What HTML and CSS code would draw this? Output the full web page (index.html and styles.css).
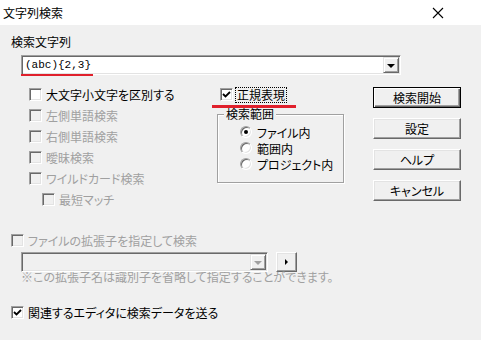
FILE: index.html
```html
<!DOCTYPE html>
<html lang="ja">
<head>
  <meta charset="UTF-8">
  <title>文字列検索</title>
  <link rel="stylesheet" href="styles.css">
</head>
<body>
  <div class="titlebar">
    <span class="title">文字列検索</span>
    <svg class="close" width="12" height="12" viewBox="0 0 12 12">
      <path d="M1 1 L11 11 M11 1 L1 11" stroke="#000" stroke-width="1.1" fill="none"/>
    </svg>
  </div>

  <div class="dialog">
    <div class="field-label">検索文字列</div>
    <div class="combo combo-main">
      <span class="combo-text">(abc){2,3}</span>
      <span class="drop-btn"><span class="arrow"></span></span>
      <span class="mark mark-combo"></span>
    </div>

    <div class="options">
      <!-- left: search flags -->
      <div class="col-left">
        <div class="check"><span class="box"></span>大文字小文字を区別する</div>
        <div class="check disabled"><span class="box"></span>左側単語検索</div>
        <div class="check disabled"><span class="box"></span>右側単語検索</div>
        <div class="check disabled"><span class="box"></span>曖昧検索</div>
        <div class="check disabled"><span class="box"></span>ワイルドカード検索</div>
        <div class="check disabled indent"><span class="box"></span>最短マッチ</div>
      </div>

      <!-- middle: regex + scope -->
      <div class="col-mid">
        <div class="check regex">
          <span class="box">
            <svg width="9" height="9" viewBox="0 0 9 9"><path d="M1 4 L3.5 6.5 L8 2" stroke="#000" stroke-width="1.8" fill="none"/></svg>
          </span>
          <span class="focus">正規表現</span>
          <span class="mark mark-regex"></span>
        </div>
        <div class="group">
          <div class="group-title">検索範囲</div>
          <div class="radios">
            <div class="radio"><span class="dot checked"></span>ファイル内</div>
            <div class="radio"><span class="dot"></span>範囲内</div>
            <div class="radio"><span class="dot"></span>プロジェクト内</div>
          </div>
        </div>
      </div>

      <!-- right: buttons -->
      <div class="col-buttons">
        <button class="btn default">検索開始</button>
        <button class="btn">設定</button>
        <button class="btn">ヘルプ</button>
        <button class="btn">キャンセル</button>
      </div>
    </div>

    <div class="check disabled ext-check"><span class="box"></span>ファイルの拡張子を指定して検索</div>
    <div class="ext-row">
      <div class="combo combo-ext">
        <span class="drop-btn"><span class="arrow gray"></span></span>
      </div>
      <span class="small-btn"><span class="tri"></span></span>
    </div>
    <div class="note">※この拡張子名は識別子を省略して指定することができます。</div>

    <div class="check send-check">
      <span class="box">
        <svg width="9" height="9" viewBox="0 0 9 9"><path d="M1 4 L3.5 6.5 L8 2" stroke="#000" stroke-width="1.8" fill="none"/></svg>
      </span>
      関連するエディタに検索データを送る
    </div>
  </div>
</body>
</html>
```

FILE: styles.css
```css
* {
  box-sizing: border-box;
}

body {
  margin: 0;
  width: 481px;
  height: 340px;
  overflow: hidden;
  background-color: #f0f0f0;
  color: #000;
  font-family: "Noto Sans CJK JP", sans-serif;
  font-size: 12px;
  font-feature-settings: "palt";
}

.titlebar {
  height: 25px;
  background-color: #fff;
  display: flex;
  align-items: center;
  justify-content: space-between;
  padding: 0 37px 0 3px;
}

.title {
  font-size: 12px;
  color: #000;
}

.field-label {
  margin: 10px 0 0 11px;
  line-height: 14px;
}

/* combo boxes */
.combo {
  position: relative;
  height: 20px;
  background-color: #fff;
  border: 1px solid;
  border-color: #a0a0a0 #fff #fff #a0a0a0;
  box-shadow: inset 1px 1px 0 #696969, inset -1px -1px 0 #e3e3e3;
  display: flex;
  align-items: center;
}

.combo-main {
  margin: 6px 0 0 21px;
  width: 380px;
}

.combo-text {
  font-family: "Liberation Mono", monospace;
  font-size: 11px;
  padding-left: 3px;
  flex: 1;
}

.drop-btn {
  width: 16px;
  height: 16px;
  margin-right: 1px;
  margin-left: auto;
  background-color: #f0f0f0;
  border: 1px solid;
  border-color: #e3e3e3 #696969 #696969 #e3e3e3;
  box-shadow: inset 1px 1px 0 #fff, inset -1px -1px 0 #a0a0a0;
  display: flex;
  align-items: center;
  justify-content: center;
}

.arrow {
  width: 0;
  height: 0;
  border-left: 4px solid transparent;
  border-right: 4px solid transparent;
  border-top: 4px solid #000;
  margin-top: 1px;
}

.arrow.gray {
  border-top-color: #a0a0a0;
}

.mark {
  position: absolute;
  height: 2px;
  background-color: #e0202c;
}

.mark-combo {
  left: -1px;
  bottom: -2px;
  width: 72px;
}

/* option area */
.options {
  display: flex;
  margin: 9px 0 0 29px;
}

.col-left {
  width: 188px;
}

.col-mid {
  width: 127px;
}

.col-buttons {
  margin-left: 29px;
  width: 88px;
  padding-top: 3px;
  display: flex;
  flex-direction: column;
  gap: 10px;
}

.check {
  display: flex;
  align-items: center;
  height: 21px;
  white-space: nowrap;
}

.check.disabled {
  color: #a0a0a0;
}

.check.indent {
  padding-left: 13px;
}

.box {
  width: 13px;
  height: 13px;
  margin-right: 4px;
  background-color: #fff;
  border: 1px solid;
  border-color: #a0a0a0 #fff #fff #a0a0a0;
  box-shadow: inset 1px 1px 0 #696969, inset -1px -1px 0 #e3e3e3;
  display: flex;
  align-items: center;
  justify-content: center;
  flex-shrink: 0;
}

.disabled .box {
  background-color: #f0f0f0;
}

.regex {
  position: relative;
  padding-left: 3px;
}

.regex .box {
  margin-right: 2px;
}

.focus {
  border: 1px dotted #000;
  padding: 0 1px;
  line-height: 14px;
}

.mark-regex {
  left: -5px;
  bottom: -3px;
  width: 84px;
  height: 3px;
}

.group {
  margin-top: 9px;
  height: 69px;
  border: 1px solid #a0a0a0;
  box-shadow: inset 1px 1px 0 #fff, 1px 1px 0 #fff;
  padding-left: 6px;
}

.group-title {
  width: max-content;
  margin-top: -8px;
  padding: 0 2px;
  line-height: 14px;
  background-color: #f0f0f0;
}

.radios {
  margin-top: 3px;
  padding-left: 16px;
}

.radio {
  display: flex;
  align-items: center;
  height: 16px;
}

.dot {
  width: 12px;
  height: 12px;
  margin-right: 5px;
  border-radius: 50%;
  background-color: #fff;
  border: 1px solid;
  border-color: #a0a0a0 #fff #fff #a0a0a0;
  box-shadow: inset 1px 1px 0 #696969, inset -1px -1px 0 #e3e3e3;
  display: flex;
  align-items: center;
  justify-content: center;
}

.dot.checked::after {
  content: "";
  width: 4px;
  height: 4px;
  border-radius: 50%;
  background-color: #000;
}

/* push buttons */
.btn {
  height: 21px;
  width: 88px;
  padding: 0;
  font-family: inherit;
  font-size: 12px;
  font-feature-settings: "palt";
  color: #000;
  background-color: #f0f0f0;
  border: 1px solid;
  border-color: #fff #696969 #696969 #fff;
  box-shadow: inset -1px -1px 0 #a0a0a0, inset 1px 1px 0 #e3e3e3;
}

.btn.default {
  border: 1px solid #000;
  box-shadow: inset 1px 1px 0 #fff, inset -1px -1px 0 #696969, inset -2px -2px 0 #a0a0a0;
}

/* bottom area */
.ext-check {
  margin: 20px 0 0 11px;
}

.ext-row {
  display: flex;
  margin: 1px 0 0 21px;
}

.combo-ext {
  width: 247px;
  background-color: #f0f0f0;
}

.small-btn {
  width: 21px;
  height: 20px;
  margin-left: 8px;
  border: 1px solid;
  border-color: #fff #696969 #696969 #fff;
  box-shadow: inset -1px -1px 0 #a0a0a0, inset 1px 1px 0 #e3e3e3;
  display: flex;
  align-items: center;
  justify-content: center;
}

.tri {
  width: 0;
  height: 0;
  border-top: 3px solid transparent;
  border-bottom: 3px solid transparent;
  border-left: 3px solid #000;
}

.note {
  margin: -2px 0 0 21px;
  line-height: 14px;
  color: #a0a0a0;
}

.send-check {
  margin: 18px 0 0 11px;
}
```
